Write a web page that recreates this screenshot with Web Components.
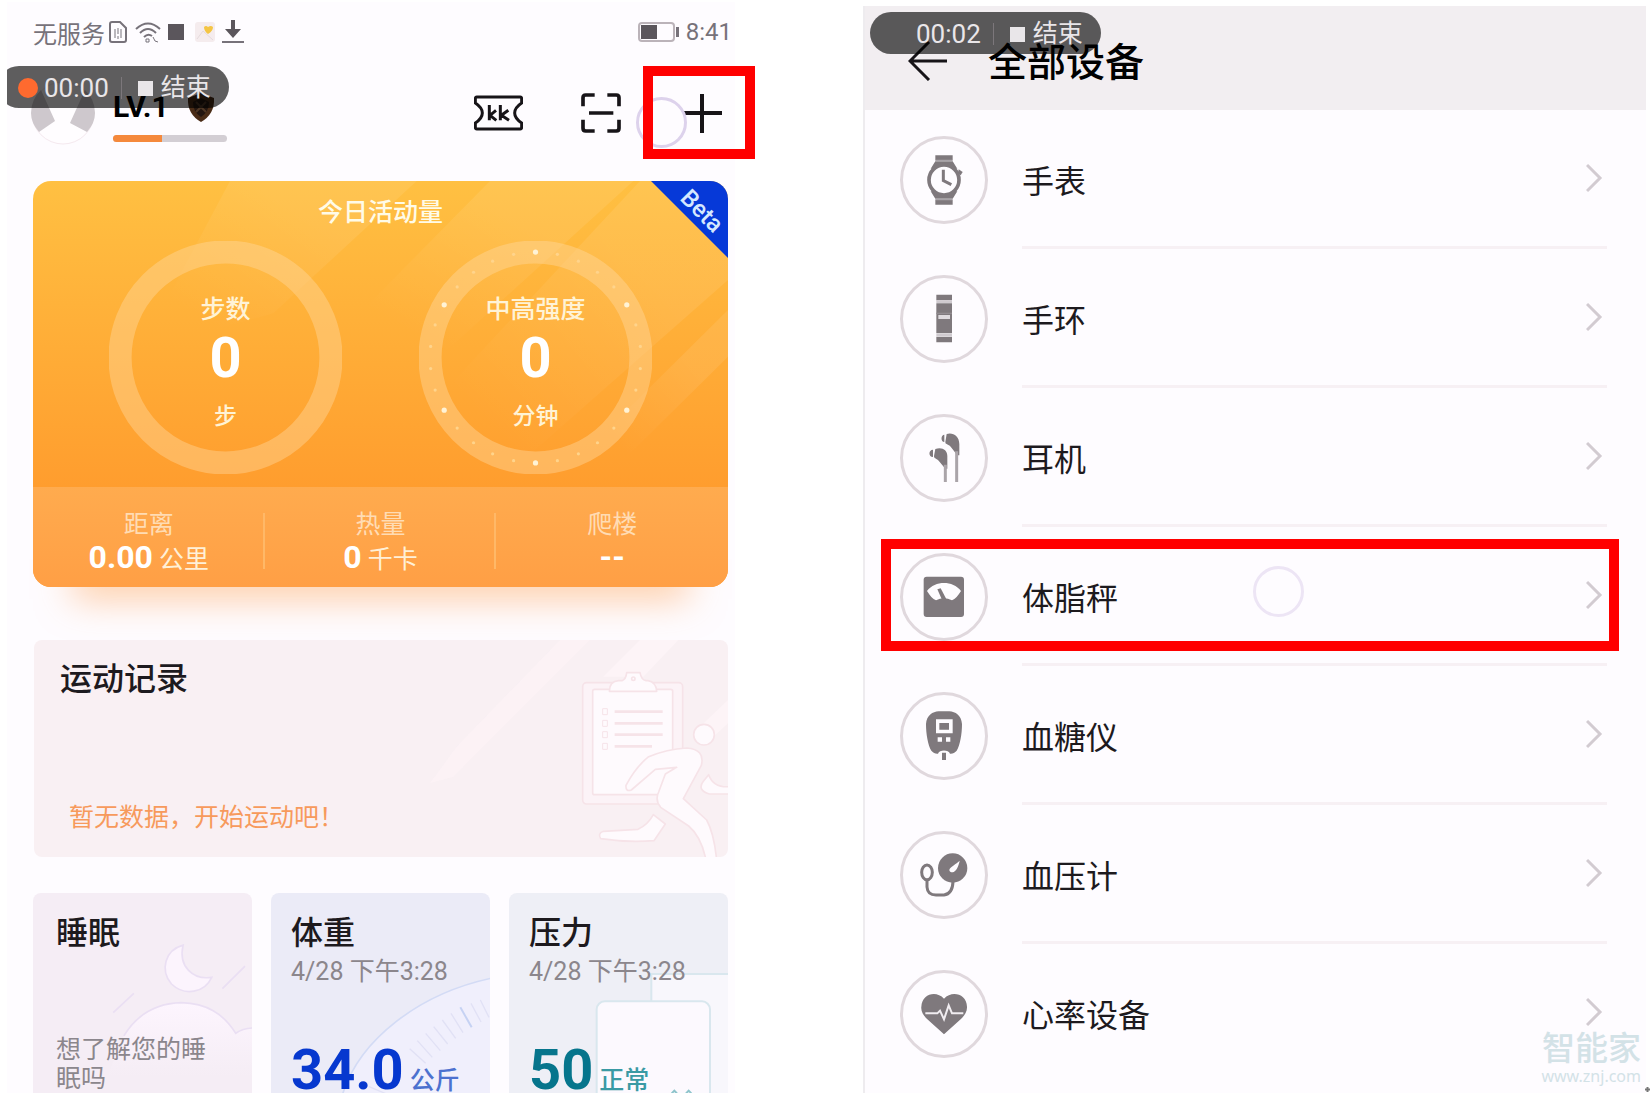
<!DOCTYPE html>
<html lang="zh-CN">
<head>
<meta charset="utf-8">
<title>运动健康 - 全部设备</title>
<style>
  :root {
    --color-screen: #fefcff;
    --color-accent: #f5893c;
    --color-muted: #8b868c;
    --color-icon: #7f797d;
    --text-small: 25px;
    --text-title: 32px;
    --text-figure: 56px;
  }

  * { box-sizing: border-box; }

  body {
    margin: 0;
    height: 100vh;
    padding: 2px 4px 4px 7px;
    display: grid;
    grid-template-columns: 728fr 783fr;
    gap: 128px;
    background: #fff;
    color: #1d1a1e;
    font-family: Roboto, "Noto Sans CJK SC", sans-serif;
    overflow: hidden;
    position: relative;
  }
</style>
</head>
<body>

<health-home>
  <status-bar slot="status"></status-bar>
  <record-pill slot="pill" time="00:00" live></record-pill>
  <profile-bar slot="profile"></profile-bar>

  <activity-card>
    <activity-ring slot="rings" label="步数" value="0" unit="步"></activity-ring>
    <activity-ring slot="rings" label="中高强度" value="0" unit="分钟" dots></activity-ring>
    <activity-stat slot="stats" label="距离" value="0.00" unit="公里"></activity-stat>
    <activity-stat slot="stats" label="热量" value="0" unit="千卡"></activity-stat>
    <activity-stat slot="stats" label="爬楼" value="--"></activity-stat>
  </activity-card>

  <workout-card heading="运动记录">暂无数据，开始运动吧！</workout-card>

  <health-tile slot="tiles" heading="睡眠" note="想了解您的睡眠吗" style="--tile-bg: #f5edf5; --tile-inset: 23px">
    <svg slot="art" viewBox="99 819 658 600" fill="#fcf4fd" stroke="#eadff3" stroke-width="5">
      <defs>
        <linearGradient id="cloud" x1="0" y1="0" x2="0" y2="1">
          <stop offset="0" stop-color="#fdf5fe"/>
          <stop offset="0.8" stop-color="#f5edf5"/>
        </linearGradient>
      </defs>
      <path d="M550 975C495 990 480 1050 515 1092C555 1130 615 1118 636 1072C580 1080 535 1040 550 975Z"/>
      <path d="M668 1106L736 1038M340 1178L402 1120" fill="none"/>
      <path d="M372 1248C410 1185 470 1150 545 1148C620 1150 670 1180 708 1240C725 1228 740 1224 762 1224V1425H300Z" fill="url(#cloud)" stroke="none"/>
      <path d="M372 1248C410 1185 470 1150 545 1148C620 1150 670 1180 708 1240C725 1228 740 1224 762 1224" fill="none"/>
    </svg>
  </health-tile>
  <health-tile slot="tiles" heading="体重" time="4/28 下午3:28" value="34.0" unit="公斤" style="--tile-bg: #ebebf7; --tile-figure: #0638cf; --tile-unit: #4c71cf">
    <svg slot="art" viewBox="-324 819 657 600" fill="none" stroke="#e1e1f5" stroke-width="4">
      <path d="M-110 1425C-60 1260 120 1120 340 1074V1425Z" fill="#f0effc" stroke="none"/>
      <path d="M-110 1425C-60 1260 120 1120 340 1074" stroke="#d3dbf5" stroke-width="5"/>
      <path d="M92 1286L140 1330M115 1262L160 1312M140 1240L184 1292M164 1220L206 1272M190 1200L230 1255M216 1180L252 1238M276 1150L306 1206M304 1140L330 1192M-30 1400L30 1425M-10 1370L40 1400"/>
      <path d="M244 1162L278 1222" stroke="#c6d2f3" stroke-width="6"/>
    </svg>
  </health-tile>
  <health-tile slot="tiles" heading="压力" time="4/28 下午3:28" value="50" unit="正常" style="--tile-bg: #eeeff6; --tile-figure: #06758c; --tile-unit: #3a9aa4">
    <svg slot="art" viewBox="387 819 657 600" fill="#f8f7fc" stroke="#d9e7ee" stroke-width="6">
      <path d="M814 1425V1062H1050V1425Z"/>
      <rect x="650" y="1144" width="340" height="310" rx="24" fill="#fcf9fe"/>
      <path d="M875 1420l8-8 8 8M918 1420l8-8 8 8" fill="none" stroke="#8dc4cb"/>
    </svg>
  </health-tile>
</health-home>

<device-list heading="全部设备">
  <record-pill slot="pill" time="00:02"></record-pill>

  <device-row label="手表">
    <svg viewBox="-132 -132 264 264">
      <path d="M-26-74H26V-60H-26ZM-26-56H26L40-34H-40ZM-26 74H26V60H-26ZM-26 56H26L40 34H-40Z"/>
      <path d="M-26-58H26M-26 58H26" stroke="#a8a3a8" stroke-width="5"/>
      <circle r="45" fill="#fefcff" stroke="#7f797d" stroke-width="11"/>
      <path d="M44-32L56-24L50-14L42-20Z"/>
      <path d="M-2-31V2L22 14" fill="none" stroke="#7f797d" stroke-width="9"/>
    </svg>
  </device-row>
  <device-row label="手环">
    <svg viewBox="-132 -132 264 264">
      <path d="M-23-73H24V-56H-23ZM-23-47H24V43H-23ZM-23 53H24V70H-23Z"/>
      <path d="M-23-52H24M-23 48H24" stroke="#cfcacf" stroke-width="8"/>
      <path d="M-17-6H18" stroke="#dedade" stroke-width="12"/>
      <path d="M-23-17H24" stroke="#918b90" stroke-width="4"/>
    </svg>
  </device-row>
  <device-row label="耳机">
    <svg viewBox="-132 -132 264 264">
      <path d="M8-72C26-78 46-66 46-42V-8H40L20-34C10-44 4-40 4-48Z"/>
      <path d="M-26-27C-6-34 10-24 10-6V32H4L-16 8C-24 0-30 2-30-6Z"/>
      <path d="M1-70C-10-70-10-48 1-48ZM-33-25C-47-25-47-3-33-3Z"/>
      <path d="M38-20V72M4 20V72" stroke="#aaa4a9" stroke-width="9"/>
    </svg>
  </device-row>
  <device-row label="体脂秤" marked>
    <svg viewBox="-132 -132 264 264">
      <rect x="-61" y="-61" width="121" height="121" rx="9"/>
      <path d="M-51-18C-26-50 26-50 51-18C42-4 34 6 24 10C8 2-8 2-24 10C-34 6-42-4-51-18Z" fill="#fefcff"/>
      <path d="M-20-23L-10-26L8 8H-6Z"/>
    </svg>
  </device-row>
  <device-row label="血糖仪">
    <svg viewBox="-132 -132 264 264">
      <path d="M-54-36C-52-62-34-73-16-74H16C34-73 52-62 54-36C54-6 48 28 38 44C32 50 26 54 18 53C14 40-14 40-18 53C-26 54-32 50-38 44C-48 28-54-6-54-36Z"/>
      <path d="M-24-50H26V-8H-24ZM-19 4H-6V17H-19ZM6 4H19V17H6Z" fill="#fefcff"/>
      <path d="M-14-39H15V-19H-14ZM-6 50H6V72H-6Z"/>
    </svg>
  </device-row>
  <device-row label="血压计">
    <svg viewBox="-132 -132 264 264">
      <circle cx="26" cy="-21" r="44"/>
      <path d="M16-16C20-26 36-32 47-43C44-26 36-10 26-8C20-8 16-10 16-16Z" fill="#fefcff"/>
      <g fill="none" stroke="#7f797d" stroke-width="9">
        <ellipse cx="-51" cy="-8" rx="16" ry="22"/>
        <path d="M-51 15V36C-50 52-40 60-24 60H0C16 58 26 46 27 20"/>
      </g>
    </svg>
  </device-row>
  <device-row label="心率设备">
    <svg viewBox="-132 -132 264 264">
      <path d="M0-46C24-72 68-60 69-22C70-6 60 6 50 16L0 61L-50 16C-60 6-70-6-68-22C-66-60-24-72 0-46Z"/>
      <path d="M-56-2H-20L-12-10L0 16L14-26L24-2H58" fill="none" stroke="#f1edf1" stroke-width="6"/>
    </svg>
  </device-row>
</device-list>

<site-mark></site-mark>

<script>
// Base class: attaches the shadow root and fills it from render()
class ViewElement extends HTMLElement {
  connectedCallback() {
    if (this.shadowRoot) return;
    this.attachShadow({ mode: "open" });
    this.shadowRoot.innerHTML = `
      <style>
        * { box-sizing: border-box; }
        h1, h2, p { margin: 0; font-weight: 500; }
        svg { display: block; }
        button { padding: 0; border: 0; background: none; color: inherit; font: inherit; cursor: pointer; }
      </style>
      ${this.render()}`;
  }

  attr(name) {
    return this.getAttribute(name) || "";
  }
}

class HealthHome extends ViewElement {
  render() {
    return `
      <style>
        :host {
          display: flex;
          flex-direction: column;
          position: relative;
          min-width: 0;
          min-height: 0;
          padding: 0 7px 0 26px;
          background: var(--color-screen);
        }

        .pill {
          position: absolute;
          top: 64px;
          left: 0;
          overflow: hidden;
        }

        .pill ::slotted(*) { margin-left: -9px; }

        .tiles {
          flex: 1;
          min-height: 0;
          display: grid;
          grid-template-columns: repeat(3, 1fr);
          gap: 19px;
          margin-top: 36px;
        }
      </style>
      <slot name="status"></slot>
      <slot name="profile"></slot>
      <slot></slot>
      <div class="tiles"><slot name="tiles"></slot></div>
      <div class="pill"><slot name="pill"></slot></div>`;
  }
}

class StatusBar extends ViewElement {
  render() {
    return `
      <style>
        :host {
          flex: none;
          display: flex;
          align-items: center;
          height: 60px;
          margin-right: -4px;
          color: #77727a;
          font-size: 24px;
        }

        .icons { display: flex; align-items: center; gap: 7px; margin-left: 3px; }
        .power { display: flex; align-items: center; gap: 6px; margin-left: auto; }
      </style>
      <span>无服务</span>
      <span class="icons">
        <svg width="20" height="24" viewBox="0 0 20 24" fill="none" stroke="#77727a" stroke-width="2">
          <path d="M2 4Q2 2 4 2H12L18 8V20Q18 22 16 22H4Q2 22 2 20Z"/>
          <path d="M7 9V18M13 9V18M10 8V14M10 16V19" stroke-width="1"/>
        </svg>
        <svg width="26" height="22" viewBox="0 0 26 22" fill="none" stroke="#77727a" stroke-width="2">
          <path d="M1 8Q13-3 25 8M5 12Q13 4 21 12M9 16Q13 12 17 15"/>
          <path d="M11 18h3v3h-3zM18 16l2 4 3 1" stroke-width="1"/>
        </svg>
        <svg width="20" height="16" viewBox="0 0 20 16"><rect width="16" height="16" fill="#5b565c"/></svg>
        <svg width="20" height="20" viewBox="0 0 20 20">
          <rect width="20" height="20" rx="3" fill="#f5ecee"/>
          <path d="M2 17L8 9L18 18" fill="none" stroke="#e5dadd"/>
          <path d="M9 5Q11 3 13 5Q16 3 18 5Q18 9 13 12Q9 9 9 5Z" fill="#f4c544"/>
        </svg>
        <svg width="22" height="24" viewBox="0 0 22 24">
          <path d="M9 0H13V9H19L11 18L3 9H9Z" fill="#5b565c"/>
          <path d="M0 22H22" stroke="#77727a" stroke-width="2"/>
        </svg>
      </span>
      <span class="power">
        <svg width="42" height="20" viewBox="0 0 42 20">
          <rect x="1" y="1" width="35" height="18" rx="3" fill="none" stroke="#bbb3b9" stroke-width="2"/>
          <rect x="3" y="3" width="16" height="14" fill="#5b565c"/>
          <rect x="38" y="5" width="3" height="10" fill="#77727a"/>
        </svg>
        <span>8:41</span>
      </span>`;
  }
}

// Floating screen-recorder control, translucent over whatever lies below
class RecordPill extends ViewElement {
  render() {
    return `
      <style>
        :host { display: block; }

        .pill {
          display: flex;
          align-items: center;
          width: 231px;
          height: 42px;
          padding: 2px 18px 0 20px;
          border-radius: 21px;
          background: rgba(0, 0, 0, 0.63);
          color: #e9e6e9;
          font-size: var(--text-small);
          line-height: 30px;
        }

        time { font-size: 26px; }
        .dot { width: 20px; height: 20px; border-radius: 50%; margin-right: 6px; }
        :host([live]) .dot { background: #ff6a2f; }
        .line { width: 1px; height: 22px; margin: 0 16px 0 12px; background: #7c777b; }

        button { display: flex; align-items: center; gap: 8px; line-height: 30px; white-space: nowrap; }
        button::before { content: ""; width: 15px; height: 15px; background: #e9e6e9; }
      </style>
      <div class="pill">
        <span class="dot"></span>
        <time>${this.attr("time")}</time>
        <span class="line"></span>
        <button type="button">结束</button>
      </div>`;
  }
}

// Red frame round a control, with the ring of the last touch
class TapMark extends ViewElement {
  render() {
    return `
      <style>
        :host { display: block; position: absolute; pointer-events: none; }
        .frame { position: absolute; inset: 0; border: 10px solid #f00; }

        .touch {
          position: absolute;
          left: var(--touch-x);
          top: var(--touch-y);
          width: 51px;
          height: 51px;
          border: 3px solid var(--touch-color, #ddd2ec);
          border-radius: 50%;
        }
      </style>
      <div class="touch"></div>
      <div class="frame"></div>`;
  }
}

class ProfileBar extends ViewElement {
  render() {
    return `
      <style>
        :host {
          flex: none;
          display: flex;
          align-items: center;
          height: 102px;
          padding-right: 6px;
        }

        .level { margin: 8px 0 0 18px; width: 114px; }
        .rank { display: flex; align-items: center; justify-content: space-between; padding-right: 12px; }
        .rank strong { font-size: 30px; line-height: 30px; font-weight: 700; color: #000; }

        progress {
          display: block;
          appearance: none;
          width: 100%;
          height: 7px;
          margin-top: 13px;
          border: 0;
        }

        progress::-webkit-progress-bar { background: #d3ced4; border-radius: 4px; }
        progress::-webkit-progress-value { background: var(--color-accent); border-radius: 4px 0 0 4px; }

        .actions { display: flex; align-items: center; margin-left: auto; gap: 58px; }
        .add { display: flex; position: relative; margin-left: 4px; }
        .add tap-mark { left: -40px; top: -28px; width: 112px; height: 93px; --touch-x: -7px; --touch-y: 31px; }
        .avatar { margin-left: -2px; }
      </style>
      <svg class="avatar" width="64" height="64" viewBox="0 0 64 64">
        <circle cx="32" cy="32" r="31" fill="#fffdff" stroke="#f5e9ef"/>
        <path d="M0 32A32 32 0 0 1 10 9L24 40L8 51Q0 42 0 32ZM64 32A32 32 0 0 0 54 9L39 42L56 51Q64 42 64 32Z" fill="#cec8cd"/>
      </svg>
      <div class="level">
        <div class="rank">
          <strong>LV.1</strong>
          <svg width="28" height="29" viewBox="0 0 28 29">
            <path d="M14 0L27 5Q28 21 14 29Q0 21 1 5Z" fill="#4a2c17"/>
            <path d="M14 5L22 9Q22 19 14 24Q6 19 6 9Z" fill="#241610"/>
            <path d="M9 9L19 19M19 9L9 19" stroke="#4f3725" stroke-width="2"/>
          </svg>
        </div>
        <progress value="43" max="100" aria-label="等级进度"></progress>
      </div>
      <div class="actions">
        <button type="button" aria-label="卡券">
          <svg width="49" height="36" viewBox="0 0 147 108" fill="none" stroke="#171418" stroke-width="9" stroke-linejoin="round">
            <path d="M8 6H139Q143 6 143 12V24Q122 38 122 54Q122 70 143 84V96Q143 102 139 102H8Q4 102 4 96V84Q25 70 25 54Q25 38 4 24V12Q4 6 8 6Z"/>
            <path d="M46 30V76M66 46L48 61L67 76M79 30V76M103 46L82 61L105 76" stroke-width="9"/>
          </svg>
        </button>
        <button type="button" aria-label="扫一扫">
          <svg width="40" height="40" viewBox="0 0 120 120" fill="none" stroke="#171418" stroke-width="11" stroke-linejoin="round">
            <path d="M6 40V14Q6 6 14 6H41M79 6H106Q114 6 114 14V40M114 80V106Q114 114 106 114H79M41 114H14Q6 114 6 106V80M24 60H97"/>
          </svg>
        </button>
        <div class="add">
          <button type="button" aria-label="添加">
            <svg width="39" height="39" viewBox="0 0 39 39" stroke="#171418" stroke-width="4"><path d="M0 19H39M19 0V39"/></svg>
          </button>
          <tap-mark></tap-mark>
        </div>
      </div>`;
  }
}

class ActivityCard extends ViewElement {
  render() {
    return `
      <style>
        :host {
          flex: none;
          display: flex;
          flex-direction: column;
          position: relative;
          margin-top: 17px;
          height: 406px;
          color: #fff;
        }

        .glow {
          position: absolute;
          left: 40px;
          right: 40px;
          bottom: 0;
          height: 40px;
          box-shadow: 0 12px 36px rgba(255, 160, 80, 0.5);
        }

        .card {
          position: relative;
          flex: 1;
          display: flex;
          flex-direction: column;
          border-radius: 18px;
          overflow: hidden;
          background: linear-gradient(#ffc042, #ff9d2e 306px);
        }

        .streaks { position: absolute; right: 0; top: 0; }
        .main { position: relative; flex: 1; }
        h2 { padding-top: 17px; font-size: var(--text-small); line-height: 30px; text-align: center; color: #fffbe8; }
        .rings { display: flex; justify-content: center; gap: 77px; margin-top: 13px; }

        .stats {
          position: relative;
          display: grid;
          grid-template-columns: repeat(3, 1fr);
          height: 100px;
          padding-top: 23px;
          background: linear-gradient(#ffab4e, #ff9f45);
        }

        .beta {
          position: absolute;
          right: 0;
          top: 0;
          width: 77px;
          height: 77px;
          background: #0639d8;
          clip-path: polygon(0 0, 100% 0, 100% 100%);
        }

        .beta span {
          position: absolute;
          left: 21px;
          top: 16px;
          width: 60px;
          text-align: center;
          font-size: 24px;
          font-weight: 500;
          line-height: 28px;
          transform: rotate(45deg);
          color: #d5e8ff;
        }
      </style>
      <div class="glow"></div>
      <section class="card">
        <svg class="streaks" width="695" height="306" viewBox="-1041 33 2085 918">
          <defs>
            <linearGradient id="fade" x1="1" y1="0" x2="0" y2="1">
              <stop offset="0.3" stop-color="#fff" stop-opacity=".08"/>
              <stop offset="0.8" stop-color="#fff" stop-opacity="0"/>
            </linearGradient>
          </defs>
          <g fill="url(#fade)">
            <path d="M-450 33H110L-320 430L-720 540Z"/>
            <path d="M330 33H760L180 560L-160 530Z"/>
            <path d="M780 33H1044V330L340 950L140 720Z"/>
            <path d="M1044 420V560L700 900L600 860Z"/>
          </g>
        </svg>
        <div class="main">
          <h2>今日活动量</h2>
          <div class="rings"><slot name="rings"></slot></div>
        </div>
        <div class="stats"><slot name="stats"></slot></div>
        <div class="beta"><span>Beta</span></div>
      </section>`;
  }
}

class ActivityRing extends ViewElement {
  // 30 minute marks, every fifth one brighter
  dots() {
    let marks = "";
    for (let i = 0; i < 30; i++) {
      const angle = (i * 12 * Math.PI) / 180;
      const x = (116 + 105 * Math.sin(angle)).toFixed(1);
      const y = (116 - 105 * Math.cos(angle)).toFixed(1);
      marks += i % 5 === 0
        ? `<circle cx="${x}" cy="${y}" r="2.6" fill="#fff3d6"/>`
        : `<circle cx="${x}" cy="${y}" r="1.6" fill="#ffd48c"/>`;
    }
    return marks;
  }

  render() {
    return `
      <style>
        :host { display: grid; width: 233px; height: 233px; }
        svg, .text { grid-area: 1 / 1; }
        .text { display: flex; flex-direction: column; align-items: center; padding-top: 54px; }
        .text span { font-size: var(--text-small); line-height: 30px; font-weight: 500; color: #fff3d6; }
        .text .unit { margin-top: 16px; font-size: 23px; }
        .text strong { font-size: var(--text-figure); line-height: 56px; font-weight: 700; margin-top: 5px; }
      </style>
      <svg width="233" height="233" viewBox="0 0 232 232">
        <circle cx="116" cy="116" r="105" fill="none" stroke="#ffd9a0" stroke-opacity=".42" stroke-width="23"/>
        ${this.hasAttribute("dots") ? this.dots() : ""}
      </svg>
      <div class="text">
        <span>${this.attr("label")}</span>
        <strong>${this.attr("value")}</strong>
        <span class="unit">${this.attr("unit")}</span>
      </div>`;
  }
}

class ActivityStat extends ViewElement {
  render() {
    return `
      <style>
        :host { display: block; position: relative; text-align: center; font-size: var(--text-small); }
        :host(:not(:last-of-type))::after {
          content: "";
          position: absolute;
          right: 0;
          top: 3px;
          width: 2px;
          height: 56px;
          background: #ffb867;
        }
        p { line-height: 30px; color: #ffdcb4; font-weight: 400; }
        .value { line-height: 34px; color: #fff0d8; }
        strong { font-size: var(--text-title); font-weight: 700; color: #fff; }
      </style>
      <p>${this.attr("label")}</p>
      <p class="value"><strong>${this.attr("value")}</strong> ${this.attr("unit")}</p>`;
  }
}

class WorkoutCard extends ViewElement {
  render() {
    return `
      <style>
        :host {
          flex: none;
          display: flex;
          flex-direction: column;
          justify-content: space-between;
          position: relative;
          height: 217px;
          margin: 53px 0 0 1px;
          padding: 19px 26px 24px;
          border-radius: 8px;
          background: #f9f0f3;
          overflow: hidden;
        }

        h2 { position: relative; font-size: var(--text-title); line-height: 40px; }
        p { position: relative; padding-left: 9px; font-size: var(--text-small); line-height: 30px; font-weight: 400; color: #f79a5c; }
        svg { position: absolute; right: 0; top: 0; }
      </style>
      <svg width="360" height="217" viewBox="-36 60 1080 651" fill="#fefafd" stroke="#f6e3e8" stroke-width="5" stroke-linejoin="round">
        <g fill="#fdf4f7" stroke="none">
          <path d="M540 60H630L220 470L150 490L230 380Z" opacity=".6"/>
          <path d="M780 60H895L790 170H670Z"/>
          <path d="M1044 240V310L1000 350L960 320Z"/>
        </g>
        <rect x="608" y="188" width="300" height="364" rx="12" fill="#fcf3f7"/>
        <rect x="638" y="208" width="240" height="316" rx="6"/>
        <path d="M688 214Q688 184 716 182H726Q738 178 740 158H780Q784 180 798 182H804Q828 186 830 214Z"/>
        <circle cx="760" cy="176" r="5"/>
        <path d="M704 275H848M704 310H848M704 344H848M704 379H816" stroke-width="8"/>
        <path d="M668 266h14v18h-14zM668 301h14v18h-14zM668 335h14v18h-14zM668 370h14v18h-14z" fill="none" stroke-width="3"/>
        <circle cx="972" cy="344" r="31"/>
        <path d="M738 496Q768 440 806 410Q860 388 920 384Q976 388 964 436L910 536L980 600Q1002 640 1010 720H978Q964 650 926 618L842 562Q824 540 836 516L856 462L890 442L826 448L754 510Q736 516 738 496Z"/>
        <path d="M986 464Q1000 504 1050 500V522H988Q950 510 970 484Z"/>
        <path d="M820 584L856 612L822 662Q740 668 662 656Q652 640 670 634L774 628Q804 614 820 584Z"/>
      </svg>
      <h2>${this.attr("heading")}</h2>
      <p><slot></slot></p>`;
  }
}

class HealthTile extends ViewElement {
  render() {
    const time = this.attr("time");
    const value = this.attr("value");
    const note = this.attr("note");
    return `
      <style>
        :host {
          display: flex;
          flex-direction: column;
          position: relative;
          min-width: 0;
          padding: 20px 12px 0 var(--tile-inset, 20px);
          border-radius: 8px 8px 0 0;
          background: var(--tile-bg);
          overflow: hidden;
        }

        ::slotted(svg) { position: absolute; left: 0; top: 0; width: 100%; height: 200px; }
        h2, p { position: relative; }
        h2 { font-size: var(--text-title); line-height: 40px; }
        .time { line-height: 30px; margin-top: 4px; white-space: nowrap; }
        .time, .note { font-size: var(--text-small); font-weight: 400; color: var(--color-muted); }
        .note { margin-top: auto; width: 152px; line-height: 29px; }
        .figure { margin-top: auto; white-space: nowrap; line-height: 20px; font-size: var(--text-small); color: var(--tile-unit); }
        .figure strong { margin-right: 6px; font-size: var(--text-figure); line-height: 46px; font-weight: 700; color: var(--tile-figure); }
      </style>
      <slot name="art"></slot>
      <h2>${this.attr("heading")}</h2>
      ${time ? `<p class="time">${time}</p>` : ""}
      ${value ? `<p class="figure"><strong>${value}</strong>${this.attr("unit")}</p>` : ""}
      ${note ? `<p class="note">${note}</p>` : ""}`;
  }
}

class DeviceList extends ViewElement {
  render() {
    return `
      <style>
        :host {
          display: block;
          position: relative;
          min-width: 0;
          margin-top: 4px;
          border-left: 2px solid #eeecef;
          background: var(--color-screen);
        }

        header {
          display: flex;
          align-items: center;
          gap: 41px;
          height: 104px;
          padding: 6px 0 0 43px;
          background: #f2eef1;
        }

        h1 { padding-top: 4px; font-size: 39px; line-height: 48px; color: #000; }
        .pill { position: absolute; left: 5px; top: 6px; }
      </style>
      <header>
        <button type="button" aria-label="返回">
          <svg width="39" height="40" viewBox="0 0 39 40" fill="none" stroke="#171418" stroke-width="3"><path d="M21 1L2 20L21 39M2 20H39"/></svg>
        </button>
        <h1>${this.attr("heading")}</h1>
      </header>
      <slot></slot>
      <div class="pill"><slot name="pill"></slot></div>`;
  }
}

class DeviceRow extends ViewElement {
  render() {
    return `
      <style>
        :host { display: block; position: relative; }

        a {
          display: flex;
          align-items: center;
          padding-left: 35px;
          color: inherit;
          text-decoration: none;
        }

        .icon {
          display: block;
          width: 88px;
          height: 88px;
          border: 3px solid #e0d8dd;
          border-radius: 50%;
        }

        ::slotted(svg) { display: block; width: 88px; height: 88px; margin: -3px; fill: var(--color-icon); }

        .label {
          flex: 1;
          display: flex;
          align-items: center;
          justify-content: space-between;
          height: 139px;
          margin: 0 39px 0 34px;
          padding-right: 4px;
          border-bottom: 3px solid #f7f0f4;
          font-size: var(--text-title);
          line-height: 40px;
        }

        .name { padding-top: 7px; }
        :host(:last-of-type) .label { border-bottom-color: transparent; }
        tap-mark { left: 16px; right: 27px; top: 12px; bottom: 15px; --touch-x: 372px; --touch-y: 27px; --touch-color: #ede5f5; }
      </style>
      <a href="#${this.attr("label")}">
        <span class="icon"><slot></slot></span>
        <span class="label">
          <span class="name">${this.attr("label")}</span>
          <svg width="17" height="30" viewBox="0 0 17 30" fill="none" stroke="#d2cbd1" stroke-width="3"><path d="M1 2L14 15L1 28"/></svg>
        </span>
      </a>
      ${this.hasAttribute("marked") ? "<tap-mark></tap-mark>" : ""}`;
  }
}

class SiteMark extends ViewElement {
  render() {
    return `
      <style>
        :host { display: block; position: absolute; right: 9px; bottom: 11px; color: #d3e2e7; text-align: right; }
        p { font-size: 33px; line-height: 34px; }
        .url { font-family: "Noto Sans", sans-serif; font-size: 16px; line-height: 20px; font-weight: 400; }
        svg { position: absolute; right: -9px; bottom: -6px; }
      </style>
      <p>智能家</p>
      <p class="url">www.znj.com</p>
      <svg width="5" height="5" viewBox="0 0 5 5" stroke="#777"><path d="M0 2.5H5M2.5 0V5" stroke-width="2"/></svg>`;
  }
}

customElements.define("health-home", HealthHome);
customElements.define("status-bar", StatusBar);
customElements.define("record-pill", RecordPill);
customElements.define("tap-mark", TapMark);
customElements.define("profile-bar", ProfileBar);
customElements.define("activity-card", ActivityCard);
customElements.define("activity-ring", ActivityRing);
customElements.define("activity-stat", ActivityStat);
customElements.define("workout-card", WorkoutCard);
customElements.define("health-tile", HealthTile);
customElements.define("device-list", DeviceList);
customElements.define("device-row", DeviceRow);
customElements.define("site-mark", SiteMark);
</script>
</body>
</html>
